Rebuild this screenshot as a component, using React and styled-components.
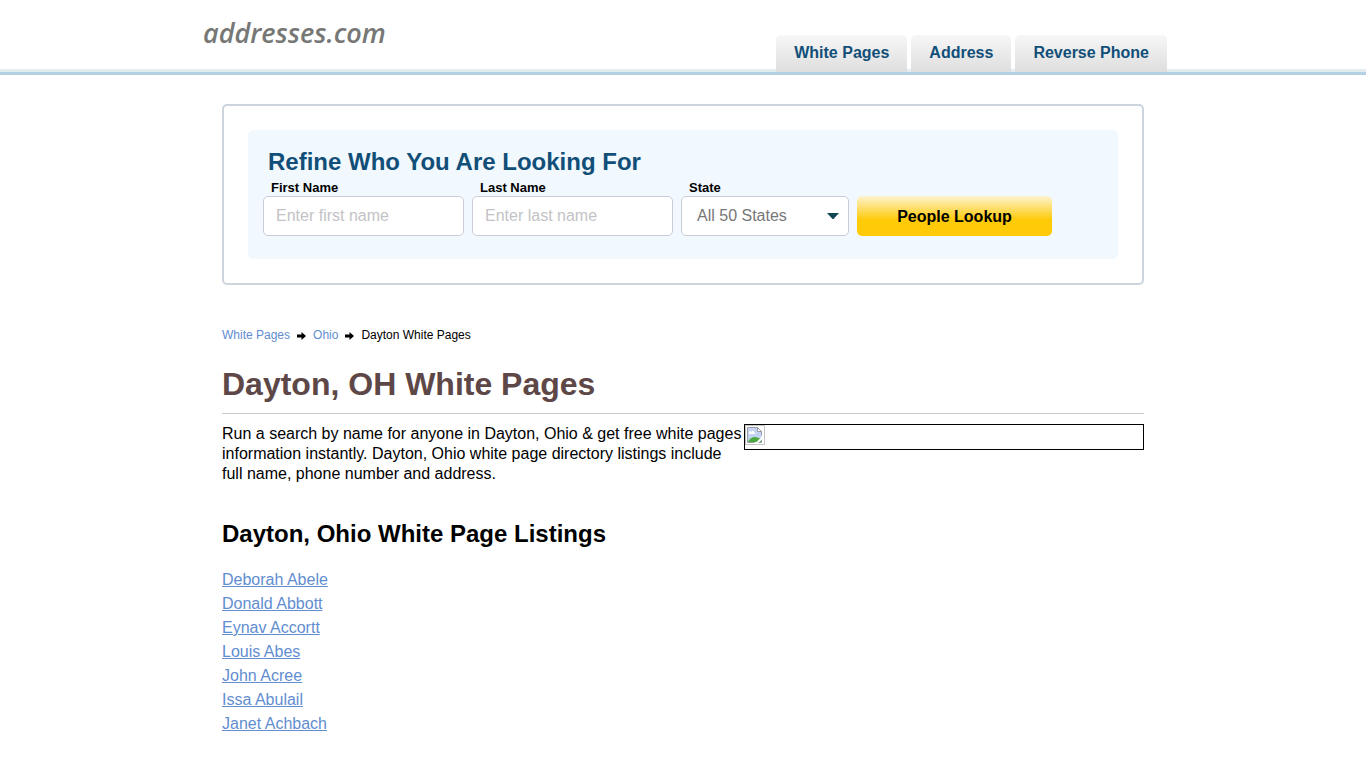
import React from "react";
import styled, { createGlobalStyle } from "styled-components";

const tabs = ["White Pages", "Address", "Reverse Phone"];

const listings = [
    "Deborah Abele",
    "Donald Abbott",
    "Eynav Accortt",
    "Louis Abes",
    "John Acree",
    "Issa Abulail",
    "Janet Achbach",
];

const Arrow = () => (
    <ArrowSvg viewBox="0 0 9 8" aria-hidden="true">
        <path d="M0 2.500h4.500V0L9 4 4.500 8V5.500H0z" />
    </ArrowSvg>
);

const BrokenImage = () => (
    <svg width="20" height="20" viewBox="0 0 20 20" aria-hidden="true">
        <path d="M.5 .5h19v19H.5z" fill="#fff" stroke="#c4c4c4" />
        <path d="M2.500 2.500h10l4 4v11h-14z" fill="#c3d3f3" />
        <path d="M4 8c0-2 2-2 2.500-1 .5-2 3-1.500 3 .5 1 0 1 1.500 0 1.500H5C4 9 4 8.500 4 8z" fill="#fff" />
        <path d="M3 17c1-3 4-5 7-5 2 0 4 1 6 2v3z" fill="#4caa3c" />
        <path d="M10 18.500l8-8v3l-5 5z" fill="#fff" />
        <path d="M2.500 17.500v-15h10l4 4v4M2.500 17.500h7M13.500 17.500h3V15" fill="none" stroke="#9a9da3" />
        <path d="M12.500 2.500v4h4z" fill="#fff" stroke="#9a9da3" />
    </svg>
);

const App = () => {
    return (
        <>
            <GlobalStyle />
            <Header>
                <HeaderInner>
                    <Logo href="#">addresses.com</Logo>
                    <Nav>
                        {tabs.map((tab) => (
                            <Tab key={tab} href="#">
                                {tab}
                            </Tab>
                        ))}
                    </Nav>
                </HeaderInner>
            </Header>
            <Main>
                <SearchBox>
                    <SearchForm onSubmit={(e) => e.preventDefault()}>
                        <FormTitle>Refine Who You Are Looking For</FormTitle>
                        <Fields>
                            <Field>
                                <Label htmlFor="first">First Name</Label>
                                <Input id="first" placeholder="Enter first name" />
                            </Field>
                            <Field>
                                <Label htmlFor="last">Last Name</Label>
                                <Input id="last" placeholder="Enter last name" />
                            </Field>
                            <Field $narrow>
                                <Label htmlFor="state">State</Label>
                                <SelectWrp>
                                    <Select id="state">
                                        <option>All 50 States</option>
                                        <option>Ohio</option>
                                    </Select>
                                    <Caret viewBox="0 0 12 6" aria-hidden="true">
                                        <path d="M0 0h12L6.500 6h-1z" />
                                    </Caret>
                                </SelectWrp>
                            </Field>
                            <Submit type="submit">People Lookup</Submit>
                        </Fields>
                    </SearchForm>
                </SearchBox>

                <Crumbs aria-label="Breadcrumb">
                    <a href="#">White Pages</a>
                    <Arrow />
                    <a href="#">Ohio</a>
                    <Arrow />
                    <span>Dayton White Pages</span>
                </Crumbs>

                <Title>Dayton, OH White Pages</Title>
                <Intro>
                    <Picture>
                        <BrokenImage />
                    </Picture>
                    <p>
                        Run a search by name for anyone in Dayton, Ohio &amp; get
                        free white pages information instantly. Dayton, Ohio white
                        page directory listings include full name, phone number and
                        address.
                    </p>
                </Intro>

                <SubTitle>Dayton, Ohio White Page Listings</SubTitle>
                <List>
                    {listings.map((name) => (
                        <li key={name}>
                            <a href="#">{name}</a>
                        </li>
                    ))}
                </List>
            </Main>
        </>
    );
};

export default App;

const GlobalStyle = createGlobalStyle`
    * {
        box-sizing: border-box;
    }

    body {
        margin: 0;
        background: #fff;
        color: #000;
        font-family: "Liberation Sans", Arial, sans-serif;
        font-size: 16px;
        line-height: 20px;
    }

    a {
        color: #628dd0;
    }

    h1, h2, p, ul {
        margin: 0;
        padding: 0;
    }
`;

const Header = styled.header`
    background: linear-gradient(#e3ecee, #e3ecee) left bottom / 100% 3px no-repeat;
    border-bottom: 3px solid #b3d1e3;
`;

const HeaderInner = styled.div`
    display: flex;
    justify-content: space-between;
    align-items: flex-end;
    max-width: 968px;
    margin: 0 auto;
    padding-top: 14px;
`;

const Logo = styled.a`
    padding: 0 0 20px 4px;
    font-family: "Open Sans", "Noto Sans", sans-serif;
    font-size: 27px;
    font-style: italic;
    font-weight: 600;
    line-height: 38px;
    color: #777775;
    text-decoration: none;
`;

const Nav = styled.nav`
    display: flex;
    gap: 4px;
`;

const Tab = styled.a`
    padding-inline: 18px;
    padding-bottom: 1px;
    border-radius: 5px 5px 0 0;
    background: linear-gradient(#f7f7f7, #dedede);
    font-weight: bold;
    line-height: 36px;
    color: #114f79;
    text-decoration: none;
`;

const Main = styled.main`
    max-width: 922px;
    margin: 0 auto;
    padding: 29px 0;
`;

const SearchBox = styled.section`
    padding: 24px;
    border: 2px solid #ccd5de;
    border-radius: 5px;
`;

const SearchForm = styled.form`
    padding: 18px 15px 23px;
    border-radius: 5px;
    background: #f1f8fe;
`;

const FormTitle = styled.h2`
    padding: 0 0 4px 5px;
    font-size: 24px;
    line-height: 28px;
    color: #114f79;
`;

const Fields = styled.div`
    display: flex;
    align-items: flex-end;
    gap: 8px;
`;

const Field = styled.div`
    flex: 0 1 ${({ $narrow }) => ($narrow ? "168px" : "201px")};
    min-width: 0;
`;

const Label = styled.label`
    display: block;
    padding-left: 8px;
    font-size: 13px;
    font-weight: bold;
    line-height: 16px;
`;

const Input = styled.input`
    display: block;
    width: 100%;
    height: 40px;
    padding: 0 12px;
    border: 1px solid #c9ced6;
    border-radius: 5px;
    background: #fff;
    font: inherit;

    &::placeholder {
        color: #c3c3c6;
    }
`;

const SelectWrp = styled.div`
    position: relative;
`;

const Select = styled.select`
    display: block;
    width: 100%;
    height: 40px;
    padding: 0 30px 0 15px;
    border: 1px solid #c9ced6;
    border-radius: 5px;
    appearance: none;
    background: #fff;
    font: inherit;
    color: #777;
`;

const Caret = styled.svg`
    position: absolute;
    top: 17px;
    right: 10px;
    width: 12px;
    height: 6px;
    fill: #0f4650;
    pointer-events: none;
`;

const Submit = styled.button`
    flex: 0 1 195px;
    height: 40px;
    padding: 2px 0 0;
    border: 0;
    border-radius: 5px;
    background: linear-gradient(#fdf3d0, #ffca08 60%);
    font: inherit;
    font-weight: bold;
    color: #000;
`;

const Crumbs = styled.nav`
    display: flex;
    align-items: center;
    gap: 7px;
    margin-top: 40px;
    font-size: 12px;

    a {
        text-decoration: none;
    }
`;

const ArrowSvg = styled.svg`
    width: 9px;
    height: 8px;
    margin-top: 2px;
`;

const Title = styled.h1`
    margin-top: 21px;
    padding-bottom: 10px;
    border-bottom: 1px solid #ccc;
    font-size: 32px;
    line-height: 37px;
    color: #5e4747;
`;

const Intro = styled.div`
    display: flow-root;
    padding-top: 10px;
`;

const Picture = styled.div`
    float: right;
    display: flex;
    width: 400px;
    max-width: 100%;
    height: 26px;
    border: 1px solid #000;
`;

const SubTitle = styled.h2`
    margin-top: 36px;
    font-size: 24px;
    line-height: 28px;
`;

const List = styled.ul`
    margin-top: 20px;
    list-style: none;
    line-height: 24px;
`;
